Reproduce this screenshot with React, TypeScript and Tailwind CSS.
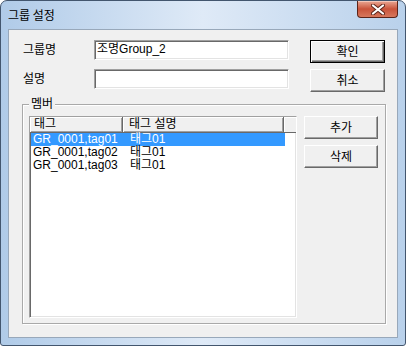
const font = "font-['Liberation_Sans','Noto_Sans_CJK_KR',sans-serif]";

const sunken =
  "border border-t-[#a0a0a0] border-l-[#a0a0a0] border-b-white border-r-white shadow-[inset_1px_1px_0_#696969,inset_-1px_-1px_0_#e3e3e3]";

function Btn({ label, def }: { label: string; def?: boolean }) {
  const edge = def
    ? "border border-black shadow-[inset_1px_1px_0_#fff,inset_-1px_-1px_0_#696969,inset_-2px_-2px_0_#a0a0a0]"
    : "border border-t-white border-l-white border-b-[#696969] border-r-[#696969] shadow-[inset_-1px_-1px_0_#a0a0a0]";
  return (
    <button className={`w-full h-full bg-[#f0f0f0] text-[12px] leading-[12px] text-black ${edge}`}>{label}</button>
  );
}

const rows = [
  { tag: "GR_0001,tag01", desc: "태그01", sel: true },
  { tag: "GR_0001,tag02", desc: "태그01" },
  { tag: "GR_0001,tag03", desc: "태그01" },
];

export default function App() {
  return (
    <div className={`${font} w-[406px] h-[346px] flex flex-col px-[7px] pb-[7px] rounded-t-[7px] rounded-b-[3px] border border-[#43566e] bg-linear-to-r from-[#b0cbe8] via-[#dfeaf7] to-[#b9d1eb]`}>
      {/* title bar */}
      <div className="h-[28px] flex items-start justify-between">
        <span className="text-[12px] leading-[28px] text-black font-['Noto_Sans_CJK_KR',sans-serif]">그룹 설정</span>
        <button className="w-[41px] h-[17px] flex items-center justify-center rounded-b-[4px] border border-t-0 border-[#5b2419] bg-linear-to-b from-[#e9a794] via-[#c9533a] to-[#d7775c] shadow-[inset_0_1px_0_#f4c6b8]">
          <svg width="14" height="11" viewBox="0 0 14 11">
            <path d="M2 1.5 L12 9.5 M12 1.5 L2 9.5" stroke="#5b2419" strokeWidth="4" strokeLinecap="round" />
            <path d="M2 1.5 L12 9.5 M12 1.5 L2 9.5" stroke="#fff" strokeWidth="2.2" strokeLinecap="round" />
          </svg>
        </button>
      </div>

      {/* client area */}
      <div className="flex-1 border border-[#98a8ba] bg-[#f0f0f0] pt-[10px] text-[12px] text-black">
        <div className="ml-[14px] h-[29px] flex items-start">
          <span className="w-[71px] leading-[20px]">그룹명</span>
          <div className={`w-[195px] h-[20px] bg-white ${sunken} px-[2px] leading-[17px]`}>조명Group_2</div>
          <div className="ml-[21px] w-[75px] h-[23px]">
            <Btn label="확인" def />
          </div>
        </div>
        <div className="ml-[14px] h-[28px] flex items-start">
          <span className="w-[71px] leading-[20px]">설명</span>
          <div className={`w-[195px] h-[20px] bg-white ${sunken}`} />
          <div className="ml-[21px] w-[75px] h-[23px]">
            <Btn label="취소" />
          </div>
        </div>

        <fieldset className="ml-[13px] w-[364px] border border-[#a9a9a9] shadow-[inset_1px_1px_0_#fff,1px_1px_0_#fff] pl-[6px] pr-[6px] pt-[5px] pb-[5px]">
          <legend className="px-[2px] text-[12px] leading-[14px] bg-[#f0f0f0]">멤버</legend>
          <div className="flex gap-[7px]">
            <div className={`w-[268px] h-[202px] bg-white ${sunken} flex flex-col`}>
              <div className="h-[16px] flex bg-[#f0f0f0]">
                <div className="w-[93px] pl-[4px] leading-[15px] border-r border-b border-[#696969] shadow-[inset_1px_1px_0_#fff,inset_-1px_-1px_0_#a0a0a0]">태그</div>
                <div className="w-[161px] pl-[6px] leading-[15px] border-r border-b border-[#696969] shadow-[inset_1px_1px_0_#fff,inset_-1px_-1px_0_#a0a0a0]">태그 설명</div>
                <div className="flex-1 border-b border-[#696969] shadow-[inset_1px_1px_0_#fff]" />
              </div>
              {rows.map((r) => (
                <div
                  key={r.tag}
                  className={`ml-[1px] w-[254px] h-[13px] flex items-start leading-[10px] ${r.sel ? "bg-[#3399ff] text-white" : ""}`}
                >
                  <span className="w-[99px] pl-[2px] pt-[1px]">{r.tag}</span>
                  <span className="pt-[1px]">{r.desc}</span>
                </div>
              ))}
            </div>
            <div className="w-[74px] flex flex-col gap-[6px]">
              <div className="h-[23px]">
                <Btn label="추가" />
              </div>
              <div className="h-[23px]">
                <Btn label="삭제" />
              </div>
            </div>
          </div>
        </fieldset>
      </div>
    </div>
  );
}
